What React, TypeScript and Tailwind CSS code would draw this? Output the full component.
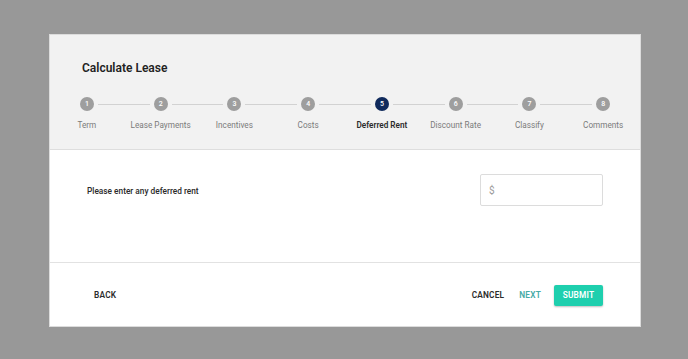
import React from 'react';

/* ─── Static data ─────────────────────────────────────────────── */

const STEPS = [
  'Term',
  'Lease Payments',
  'Incentives',
  'Costs',
  'Deferred Rent',
  'Discount Rate',
  'Classify',
  'Comments',
];

const ACTIVE_STEP = 4;

/* ─── Stepper ─────────────────────────────────────────────────── */

function Stepper() {
  return (
    <div className="grid grid-cols-8 mt-[21px]">
      {STEPS.map((label, i) => {
        const isActive = i === ACTIVE_STEP;
        return (
          <div key={label} className="flex flex-col items-center">
            <div className="flex items-center w-full">
              <div className={`flex-1 h-px mr-[4px] ${i === 0 ? 'bg-transparent' : 'bg-[#d2d2d2]'}`} />
              <div
                className={`w-[14px] h-[14px] rounded-full flex items-center justify-center text-[7px] leading-none font-medium text-white
                  ${isActive ? 'bg-[#102a5c]' : 'bg-[#9e9e9e]'}`}
              >
                {i + 1}
              </div>
              <div className={`flex-1 h-px ml-[4px] ${i === STEPS.length - 1 ? 'bg-transparent' : 'bg-[#d2d2d2]'}`} />
            </div>
            <span
              className={`mt-[8px] text-[8.2px] leading-[12px] whitespace-nowrap
                ${isActive ? 'font-semibold text-[#2b2b2b]' : 'text-[#7b7b7b]'}`}
            >
              {label}
            </span>
          </div>
        );
      })}
    </div>
  );
}

/* ─── App ─────────────────────────────────────────────────────── */

export default function App() {
  return (
    <div
      className="w-full h-[359px] bg-[#989898] pt-[34px] pl-[49px]"
      style={{ fontFamily: 'Roboto, "Liberation Sans", sans-serif' }}
    >
      <div className="w-[592px] h-[293px] bg-white border border-[#dcdcdc] flex flex-col">
        {/* Header */}
        <div className="h-[115px] bg-[#f2f2f2] border-b border-[#dedede] pt-[25px] shrink-0">
          <h1 className="pl-[32px] text-[12px] leading-[16px] font-semibold text-[#222]">Calculate Lease</h1>
          <Stepper />
        </div>

        {/* Body */}
        <div className="h-[113px] border-b border-[#e2e2e2] pt-[24px] pl-[37px] pr-[37px] shrink-0">
          <div className="flex items-center justify-between h-[32px]">
            <label className="text-[8.3px] leading-[12px] mt-[1px] font-medium text-[#2b2b2b]">
              Please enter any deferred rent
            </label>
            <div className="w-[123px] h-[32px] border border-[#dcdcdc] rounded-[2px] flex items-center pl-[8px] text-[10px] text-[#9a9a9a]">
              $
            </div>
          </div>
        </div>

        {/* Footer */}
        <div className="flex-1 flex items-center justify-between pl-[44px] pr-[37px] pt-[2px]">
          <button type="button" className="text-[8.3px] font-semibold tracking-[0.2px] text-[#2b2b2b]">
            BACK
          </button>
          <div className="flex items-center">
            <button type="button" className="text-[8.3px] font-semibold tracking-[0.2px] text-[#2b2b2b]">
              CANCEL
            </button>
            <button type="button" className="ml-[15px] text-[8.3px] font-semibold tracking-[0.2px] text-[#46aaa6]">
              NEXT
            </button>
            <button
              type="button"
              className="ml-[13px] w-[49px] h-[21px] rounded-[2px] bg-[#1ecfae] text-white text-[8.3px] font-semibold tracking-[0.2px] shadow-[0_1px_2px_rgba(0,0,0,0.25)]"
            >
              SUBMIT
            </button>
          </div>
        </div>
      </div>
    </div>
  );
}
